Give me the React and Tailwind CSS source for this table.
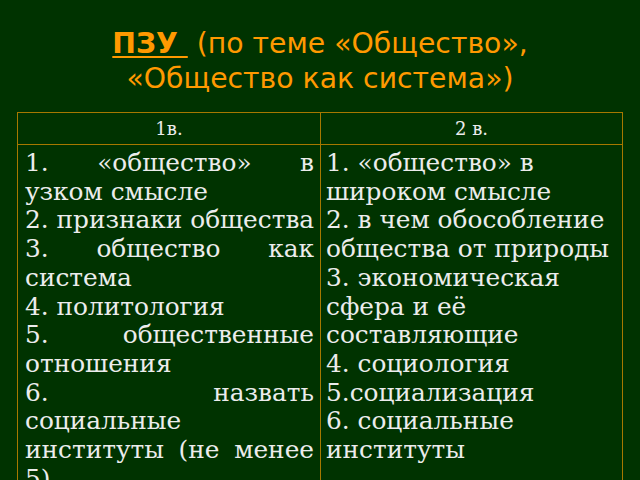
export default function App() {
  const serif = { fontFamily: '"DejaVu Serif", "Liberation Serif", serif' };
  const J = ({ children }) => (
    <div className="text-justify [text-align-last:justify]">{children}</div>
  );
  const L = ({ children }) => <div className="text-left">{children}</div>;
  return (
    <div className="w-[640px] h-[480px] overflow-hidden bg-[#003300]">
      <div
        className="pt-[26px] text-center text-[28.3px] leading-[35px] text-[#ff9900]"
        style={{ fontFamily: '"DejaVu Sans", "Noto Sans", sans-serif' }}
      >
        <div>
          <span className="font-bold underline decoration-2 underline-offset-[3px]">ПЗУ&nbsp;</span>
          &nbsp;(по теме «Общество»,
        </div>
        <div>«Общество как система»)</div>
      </div>
      <div
        className="mt-[16px] ml-[17px] w-[606px] border border-[#a67800] grid grid-cols-[303px_1fr] text-[#ececec]"
        style={serif}
      >
        <div className="h-[32px] flex items-center justify-center border-r border-b border-[#a67800] text-[18px]">
          1в.
        </div>
        <div className="h-[32px] flex items-center justify-center border-b border-[#a67800] text-[18px]">
          2 в.
        </div>
        <div className="border-r border-[#a67800] pl-[7px] pr-[6px] pt-[4px] pb-[20px] text-[24.8px] leading-[28.7px]">
          <J>1. «общество» в</J>
          <L>узком смысле</L>
          <div className="whitespace-nowrap">2. признаки общества</div>
          <J>3. общество как</J>
          <L>система</L>
          <L>4. политология</L>
          <J>5. общественные</J>
          <L>отношения</L>
          <J>6. назвать</J>
          <L>социальные</L>
          <J>институты (не менее</J>
          <L>5)</L>
        </div>
        <div className="pl-[5px] pr-[4px] pt-[4px] pb-[20px] text-[24.8px] leading-[28.7px] whitespace-nowrap">
          <L>1. «общество» в</L>
          <L>широком смысле</L>
          <L>2. в чем обособление</L>
          <L>общества от природы</L>
          <L>3. экономическая</L>
          <L>сфера и её</L>
          <L>составляющие</L>
          <L>4. социология</L>
          <L>5.социализация</L>
          <L>6. социальные</L>
          <L>институты</L>
        </div>
      </div>
    </div>
  );
}
